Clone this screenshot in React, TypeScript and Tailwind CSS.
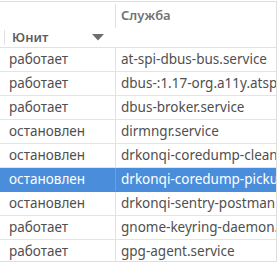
const rows = [
  { state: 'работает', unit: 'at-spi-dbus-bus.service' },
  { state: 'работает', unit: 'dbus-:1.17-org.a11y.atspi.Registry.service' },
  { state: 'работает', unit: 'dbus-broker.service' },
  { state: 'остановлен', unit: 'dirmngr.service' },
  { state: 'остановлен', unit: 'drkonqi-coredump-cleanup.service' },
  { state: 'остановлен', unit: 'drkonqi-coredump-pickup.service', selected: true },
  { state: 'остановлен', unit: 'drkonqi-sentry-postman.service' },
  { state: 'работает', unit: 'gnome-keyring-daemon.service' },
  { state: 'работает', unit: 'gpg-agent.service' },
];

export default function App() {
  return (
    <div className="pt-px w-[279px] h-[268px] bg-white font-['Noto_Sans',sans-serif] text-[13.5px]">
      <div className="w-[277px] h-[261px] border-t border-r border-b border-[#dedede] overflow-hidden">
        <div className="h-[46px] border-b border-[#e2e2e2] flex flex-col text-[13px]">
          <div className="h-[26px] flex shrink-0">
            <div className="w-[115px] shrink-0" />
            <div className="mt-[2px] flex-1 border-l border-[#e2e2e2] pl-[5px] flex items-center font-semibold text-[#727272]">
              Служба
            </div>
          </div>
          <div className="h-[19px] flex shrink-0">
            <div className="w-[115px] shrink-0 flex">
              <div className="ml-1 mt-[2px] h-[15px] flex-1 border-l border-[#e2e2e2] pl-[7px] flex items-center font-semibold text-[#5e5e5e]">
                Юнит
                <svg className="ml-auto mr-[11px]" width="12" height="7" viewBox="0 0 12 7">
                  <path d="M0 0 L12 0 L6 6.5 Z" fill="#6e6e6e" />
                </svg>
              </div>
            </div>
            <div className="flex-1" />
          </div>
        </div>
        {rows.map((r, i) => (
          <div
            key={i}
            className={
              r.selected
                ? 'h-6 flex border-b border-[#4a8edb] bg-[#4a8edb] text-white'
                : 'h-6 flex border-b border-[#e4e4e4] text-[#4f4f4f]'
            }
          >
            <div className="w-[115px] shrink-0 pl-[9px] flex items-center whitespace-nowrap">{r.state}</div>
            <div
              className={
                r.selected
                  ? 'flex-1 min-w-0 border-l border-[#6aa2e0] pl-[5px] flex items-center whitespace-nowrap overflow-hidden'
                  : 'flex-1 min-w-0 border-l border-[#e2e2e2] pl-[5px] flex items-center whitespace-nowrap overflow-hidden'
              }
            >
              {r.unit}
            </div>
          </div>
        ))}
      </div>
    </div>
  );
}
